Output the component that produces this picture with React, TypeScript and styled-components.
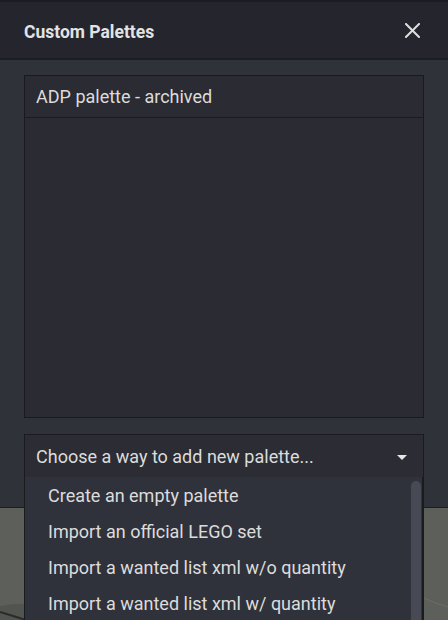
import React from "react";
import styled, { createGlobalStyle } from "styled-components";

const Global = createGlobalStyle`
  html, body { margin: 0; padding: 0; }
  body {
    background: #5d5f5a;
    font-family: Roboto, "Noto Sans", "Liberation Sans", sans-serif;
    -webkit-font-smoothing: antialiased;
  }
`;

const Page = styled.div`
  position: relative;
  width: 448px;
  height: 620px;
  overflow: hidden;
  background: #5d5f5a;
`;

const Scene = styled.svg`
  position: absolute;
  left: 0;
  bottom: 0;
  width: 448px;
  height: 112px;
`;

const Dialog = styled.div`
  position: relative;
  z-index: 1;
  width: 448px;
  background: #30323a;
  border-top: 2px solid #1c1d22;
  border-bottom: 1px solid #1c1d22;
  box-sizing: border-box;
`;

const Header = styled.div`
  display: flex;
  align-items: center;
  justify-content: space-between;
  height: 56px;
  padding: 0 26px 0 24px;
  background: #25262d;
  border-bottom: 2px solid #1c1d22;
`;

const Title = styled.h1`
  margin: 0;
  padding-top: 4px;
  font-size: 17.5px;
  font-weight: 700;
  color: #e3e3e3;
  letter-spacing: 0;
`;

const CloseButton = styled.button`
  display: flex;
  align-items: center;
  justify-content: center;
  width: 20px;
  height: 20px;
  padding: 0;
  border: none;
  background: transparent;
  color: #dedede;
  cursor: pointer;
`;

const Body = styled.div`
  display: flex;
  flex-direction: column;
  gap: 16px;
  padding: 15px 24px 29px;
`;

const ListBox = styled.div`
  height: 343px;
  box-sizing: border-box;
  border: 1px solid #1a1b1f;
  background: #2a2b33;
`;

const ListRow = styled.div`
  display: flex;
  align-items: center;
  height: 41px;
  padding: 0 11px;
  border-bottom: 1px solid #1a1b1f;
  font-size: 18px;
  color: #dcdcdc;
`;

const SelectWrap = styled.div`
  position: relative;
`;

const Select = styled.div`
  display: flex;
  align-items: center;
  justify-content: space-between;
  height: 44px;
  box-sizing: border-box;
  padding: 0 16px 0 11px;
  border: 1px solid #1a1b1f;
  background: #2b2c34;
  font-size: 18px;
  color: #dcdcdc;
`;

const Caret = styled.span`
  width: 0;
  height: 0;
  margin-top: 2px;
  border-left: 5px solid transparent;
  border-right: 5px solid transparent;
  border-top: 5px solid #e6e6e6;
`;

const Menu = styled.div`
  position: absolute;
  z-index: 2;
  top: calc(100% - 1px);
  left: 0;
  right: 0;
  height: 144px;
  overflow: hidden;
  box-sizing: border-box;
  border-left: 1px solid #1a1b1f;
  border-right: 2px solid #1a1b1f;
  background: #30323b;
`;

const MenuItem = styled.div`
  display: flex;
  align-items: center;
  height: 36px;
  padding-left: 23px;
  font-size: 18px;
  color: #dcdcdc;
  white-space: nowrap;
`;

const ScrollThumb = styled.div`
  position: absolute;
  top: 4px;
  right: 1px;
  width: 10px;
  height: 200px;
  border-radius: 5px;
  background: #474955;
`;

const items = [
  "Create an empty palette",
  "Import an official LEGO set",
  "Import a wanted list xml w/o quantity",
  "Import a wanted list xml w/ quantity",
];

export default function App() {
  return (
    <>
      <Global />
      <Page>
        <Scene viewBox="0 0 448 112">
          <path d="M0 98 Q 30 92 60 104 L 60 112 L 0 112 Z" fill="#4a4c48" opacity="0.6" />
          <path d="M0 104 L 26 112" stroke="#2a2b2a" strokeWidth="2" />
          <path d="M424 90 Q 436 96 448 99" stroke="#6b6d68" strokeWidth="1" fill="none" />
        </Scene>
        <Dialog>
          <Header>
            <Title>Custom Palettes</Title>
            <CloseButton aria-label="Close">
              <svg width="15" height="15" viewBox="0 0 15 15">
                <path d="M1 1 L14 14 M14 1 L1 14" stroke="currentColor" strokeWidth="2" strokeLinecap="square" />
              </svg>
            </CloseButton>
          </Header>
          <Body>
            <ListBox>
              <ListRow>ADP palette - archived</ListRow>
            </ListBox>
            <SelectWrap>
              <Select>
                <span>Choose a way to add new palette...</span>
                <Caret />
              </Select>
              <Menu>
                {items.map((t) => (
                  <MenuItem key={t}>{t}</MenuItem>
                ))}
                <ScrollThumb />
              </Menu>
            </SelectWrap>
          </Body>
        </Dialog>
      </Page>
    </>
  );
}
